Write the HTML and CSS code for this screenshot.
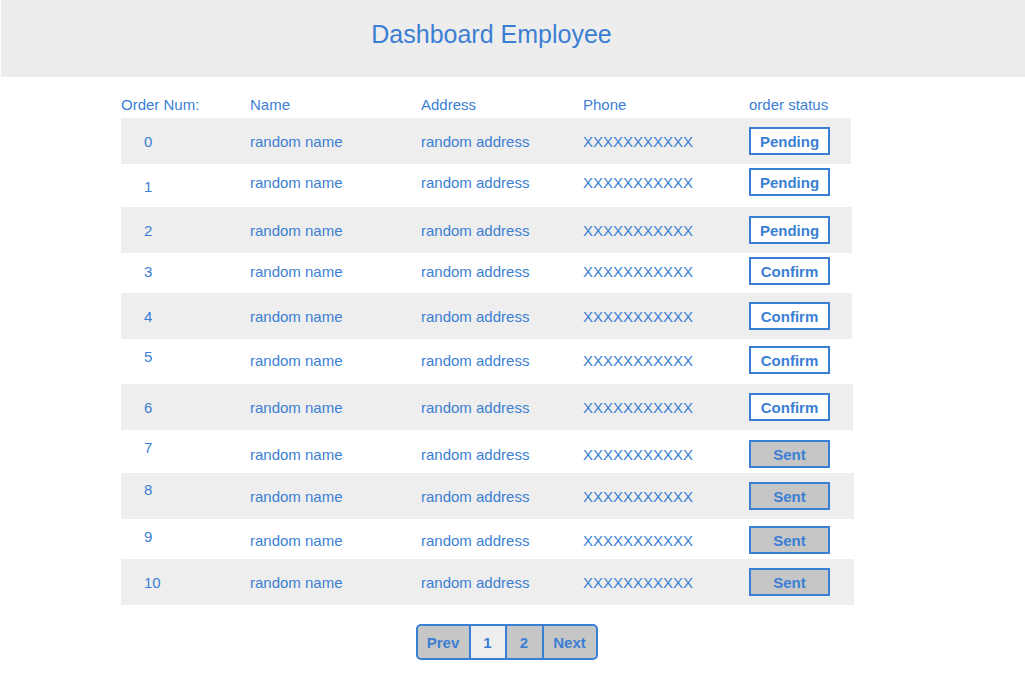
FILE: index.html
```html
<!DOCTYPE html>
<html lang="en">
<head>
<meta charset="utf-8">
<title>Dashboard Employee</title>
<link rel="stylesheet" href="styles.css">
</head>
<body>
<header class="topbar">
  <h1 class="title">Dashboard Employee</h1>
</header>
<main class="orders">
  <div class="labels">
    <div class="c-num">Order Num:</div>
    <div class="c-name">Name</div>
    <div class="c-addr">Address</div>
    <div class="c-phone">Phone</div>
    <div class="c-status">order status</div>
  </div>

  <div class="row grey h46 p9">
    <div class="c-num pad">0</div><div class="c-name">random name</div><div class="c-addr">random address</div><div class="c-phone">XXXXXXXXXXX</div>
    <div class="c-status"><span class="badge">Pending</span></div>
  </div>
  <div class="row h43 p4">
    <div class="c-num pad dn4">1</div><div class="c-name">random name</div><div class="c-addr">random address</div><div class="c-phone">XXXXXXXXXXX</div>
    <div class="c-status"><span class="badge">Pending</span></div>
  </div>
  <div class="row grey h46 p9 w731">
    <div class="c-num pad">2</div><div class="c-name">random name</div><div class="c-addr">random address</div><div class="c-phone">XXXXXXXXXXX</div>
    <div class="c-status"><span class="badge">Pending</span></div>
  </div>
  <div class="row h40 p4">
    <div class="c-num pad">3</div><div class="c-name">random name</div><div class="c-addr">random address</div><div class="c-phone">XXXXXXXXXXX</div>
    <div class="c-status"><span class="badge">Confirm</span></div>
  </div>
  <div class="row grey h46 p9 w731">
    <div class="c-num pad">4</div><div class="c-name">random name</div><div class="c-addr">random address</div><div class="c-phone">XXXXXXXXXXX</div>
    <div class="c-status"><span class="badge">Confirm</span></div>
  </div>
  <div class="row h45 p7">
    <div class="c-num pad up4">5</div><div class="c-name">random name</div><div class="c-addr">random address</div><div class="c-phone">XXXXXXXXXXX</div>
    <div class="c-status"><span class="badge">Confirm</span></div>
  </div>
  <div class="row grey h46 p9 w732">
    <div class="c-num pad">6</div><div class="c-name">random name</div><div class="c-addr">random address</div><div class="c-phone">XXXXXXXXXXX</div>
    <div class="c-status"><span class="badge">Confirm</span></div>
  </div>
  <div class="row h43 p10">
    <div class="c-num pad up7">7</div><div class="c-name">random name</div><div class="c-addr">random address</div><div class="c-phone">XXXXXXXXXXX</div>
    <div class="c-status"><span class="badge sent">Sent</span></div>
  </div>
  <div class="row grey h46 p9 w733">
    <div class="c-num pad up7">8</div><div class="c-name">random name</div><div class="c-addr">random address</div><div class="c-phone">XXXXXXXXXXX</div>
    <div class="c-status"><span class="badge sent">Sent</span></div>
  </div>
  <div class="row h40 p7">
    <div class="c-num pad up4">9</div><div class="c-name">random name</div><div class="c-addr">random address</div><div class="c-phone">XXXXXXXXXXX</div>
    <div class="c-status"><span class="badge sent">Sent</span></div>
  </div>
  <div class="row grey h46 p9 w733">
    <div class="c-num pad">10</div><div class="c-name">random name</div><div class="c-addr">random address</div><div class="c-phone">XXXXXXXXXXX</div>
    <div class="c-status"><span class="badge sent">Sent</span></div>
  </div>
</main>
<nav class="pager">
  <div class="pager-box">
    <span class="pg pg-text">Prev</span>
    <span class="pg pg-num current">1</span>
    <span class="pg pg-num pg-num2">2</span>
    <span class="pg pg-text">Next</span>
  </div>
</nav>
</body>
</html>
```

FILE: styles.css
```css
* { box-sizing: border-box; }

html, body {
  margin: 0;
  padding: 0;
  background: #ffffff;
}

body {
  font-family: "Liberation Sans", Arial, sans-serif;
  font-size: 15px;
  color: #3b7fd4;
}

.topbar {
  margin-left: 1px;
  height: 77px;
  background: #ededed;
  padding: 19px 43px 0 0;
}

.title {
  margin: 0;
  text-align: center;
  font-weight: normal;
  font-size: 25px;
  line-height: 30px;
  color: #3b7fd4;
}

.orders {
  margin-left: 121px;
  display: flex;
  flex-direction: column;
}

.labels {
  display: flex;
  padding-top: 19px;
  padding-bottom: 4px;
  line-height: 18px;
}

.c-num { width: 129px; flex: none; }
.c-name { width: 171px; flex: none; }
.c-addr { width: 162px; flex: none; }
.c-phone { width: 166px; flex: none; }
.c-status { flex: none; }

.row {
  display: flex;
  align-items: flex-start;
  width: 730px;
  line-height: 28px;
}

.row .c-num,
.row .c-name,
.row .c-addr,
.row .c-phone { padding-top: 1px; }

.row.grey { background: #eeeeee; }
.row.w731 { width: 731px; }
.row.w732 { width: 732px; }
.row.w733 { width: 733px; }

.h40 { height: 40px; }
.h43 { height: 43px; }
.h45 { height: 45px; }
.h46 { height: 46px; }

.p4 { padding-top: 4px; }
.p7 { padding-top: 7px; }
.p9 { padding-top: 9px; }
.p10 { padding-top: 10px; }

.row .pad { padding-left: 23px; }
.dn4 { margin-top: 4px; }
.up4 { margin-top: -4px; }
.up7 { margin-top: -7px; }

.badge {
  display: block;
  width: 81px;
  height: 28px;
  border: 2px solid #3b7fd4;
  background: #ffffff;
  text-align: center;
  font-weight: bold;
  padding-top: 1px;
  line-height: 24px;
}

.badge.sent { background: #c6c6c6; }

.pager {
  display: flex;
  justify-content: center;
  padding-right: 12px;
  margin-top: 19px;
}

.pager-box {
  display: flex;
  border: 2px solid #3b7fd4;
  border-radius: 5px;
  overflow: hidden;
  background: #3b7fd4;
  gap: 2px;
}

.pg {
  display: block;
  height: 32px;
  padding-top: 1px;
  line-height: 31px;
  font-weight: bold;
  text-align: center;
  background: #c6c6c6;
}

.pg-text { padding-left: 8px; padding-right: 8px; min-width: 51px; }
.pg-text:last-child { min-width: 52px; }
.pg-num { width: 34px; }
.pg-num2 { width: 35px; }
.pg.current { background: #eeeeee; }
```
